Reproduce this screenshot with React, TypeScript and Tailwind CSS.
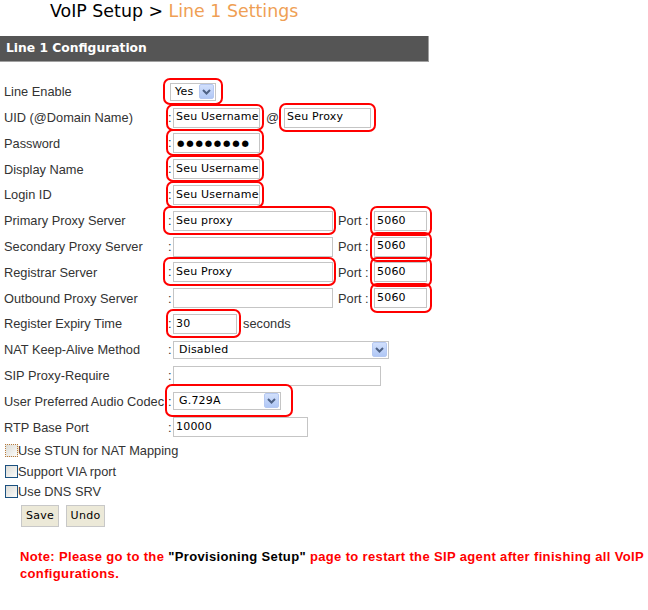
import React from "react";

const LBL = "font-['Liberation_Sans',Arial,sans-serif] text-[12.8px] text-[#333]";
const FLD = "font-['DejaVu_Sans',Verdana,sans-serif] text-[11px] text-black";

function Row({ label, children }: { label: string; children?: React.ReactNode }) {
  return (
    <div className="flex h-[25.8px] items-center">
      <div className={`w-[168px] shrink-0 whitespace-nowrap pl-[4px] ${LBL}`}>{label}</div>
      <div className="flex items-center">{children}</div>
    </div>
  );
}

function Colon() {
  return <span className={`w-[5px] shrink-0 ${LBL}`}>:</span>;
}

function Hl({ children, box }: { children: React.ReactNode; box: string }) {
  return (
    <span className="relative inline-flex">
      {children}
      <span className={`pointer-events-none absolute rounded-[7px] border-2 border-[#ff0000] ${box}`} />
    </span>
  );
}

function Input({ value, w }: { value?: React.ReactNode; w: string }) {
  return (
    <div className={`flex h-[20px] items-center border border-[#c5c5c5] bg-white pl-[2px] ${w} ${FLD} whitespace-nowrap overflow-hidden tracking-[0.2px]`}>
      {value}
    </div>
  );
}

function Arrow() {
  return (
    <div className="flex h-[15px] w-[15px] items-center justify-center rounded-[2px] border border-[#b5c8f2] bg-gradient-to-b from-[#d2e0fc] to-[#b0c7f5]">
      <svg width="9" height="6" viewBox="0 0 9 6">
        <polyline points="1,1 4.5,4.5 8,1" fill="none" stroke="#4d6185" strokeWidth="2" />
      </svg>
    </div>
  );
}

function Select({ value, w, pl }: { value: string; w: string; pl: string }) {
  return (
    <div className={`flex h-[18px] items-center justify-between border border-[#c5c5c5] bg-white pr-[1px] ${pl} ${w} ${FLD} tracking-[0.2px]`}>
      <span>{value}</span>
      <Arrow />
    </div>
  );
}

function Port() {
  return (
    <>
      <span className={`ml-[5px] w-[36px] shrink-0 ${LBL}`}>Port :</span>
      <Hl box="-left-[4px] -right-[5px] -top-[5px] -bottom-[5px]">
        <Input value="5060" w="w-[53px]" />
      </Hl>
    </>
  );
}

function Check({ label, focus }: { label: string; focus?: boolean }) {
  return (
    <div className="flex h-[20.7px] items-center pl-[5px]">
      <div
        className={`h-[13px] w-[13px] shrink-0 bg-gradient-to-br from-[#dcdcd7] to-[#fbfbf9] ${
          focus ? "border border-dotted border-[#b87a3a]" : "border border-[#1c5180]"
        }`}
      />
      <span className={`${LBL}`}>{label}</span>
    </div>
  );
}

function Btn({ label, w }: { label: string; w: string }) {
  return (
    <div className={`flex h-[22px] ${w} items-center justify-center border border-[#c8c8c8] bg-[#ece9d8] ${FLD} tracking-[0.3px]`}>
      {label}
    </div>
  );
}

export default function App() {
  return (
    <div className="h-[610px] w-[648px] bg-white">
      <div className="whitespace-nowrap pl-[50px] pt-[1px] font-['DejaVu_Sans',Verdana,sans-serif] text-[17.4px] leading-[20px] text-black">
        VoIP Setup &gt; <span className="text-[#ef9f55]">Line 1 Settings</span>
      </div>

      <div className="mt-[15px] flex h-[26px] w-[429px] items-center border-b border-r border-[#a0a0a0] bg-[#555555] pl-[6px] font-['DejaVu_Sans',Verdana,sans-serif] text-[12.3px] font-bold text-white">
        Line 1 Configuration
      </div>

      <div className="mt-[17px]">
        <Row label="Line Enable">
          <span className="w-[2px]" />
          <Hl box="-left-[7px] -right-[7px] -top-[5px] -bottom-[4px]">
            <Select value="Yes" w="w-[46px]" pl="pl-[4px]" />
          </Hl>
        </Row>
        <Row label="UID (@Domain Name)">
          <Hl box="-left-[2px] -right-[4px] -top-[4px] -bottom-[3px]">
            <Colon />
            <Input value="Seu Username" w="w-[87px]" />
          </Hl>
          <span className={`ml-[6px] mr-[5px] ${LBL}`}>@</span>
          <Hl box="-left-[5px] -right-[5px] -top-[5px] -bottom-[4px]">
            <Input value="Seu Proxy" w="w-[87px]" />
          </Hl>
        </Row>
        <Row label="Password">
          <Hl box="-left-[2px] -right-[4px] -top-[4px] -bottom-[3px]">
            <Colon />
            <Input value={<span className="pl-[1px] text-[8.5px] tracking-[1.8px]">●●●●●●●●</span>} w="w-[87px]" />
          </Hl>
        </Row>
        <Row label="Display Name">
          <Hl box="-left-[2px] -right-[4px] -top-[4px] -bottom-[3px]">
            <Colon />
            <Input value="Seu Username" w="w-[87px]" />
          </Hl>
        </Row>
        <Row label="Login ID">
          <Hl box="-left-[2px] -right-[4px] -top-[4px] -bottom-[3px]">
            <Colon />
            <Input value="Seu Username" w="w-[87px]" />
          </Hl>
        </Row>
        <Row label="Primary Proxy Server">
          <Hl box="-left-[5px] -right-[3px] -top-[5px] -bottom-[4px]">
            <Colon />
            <Input value="Seu proxy" w="w-[160px]" />
          </Hl>
          <Port />
        </Row>
        <Row label="Secondary Proxy Server">
          <Colon />
          <Input w="w-[160px]" />
          <Port />
        </Row>
        <Row label="Registrar Server">
          <Hl box="-left-[5px] -right-[3px] -top-[5px] -bottom-[4px]">
            <Colon />
            <Input value="Seu Proxy" w="w-[160px]" />
          </Hl>
          <Port />
        </Row>
        <Row label="Outbound Proxy Server">
          <Colon />
          <Input w="w-[160px]" />
          <Port />
        </Row>
        <Row label="Register Expiry Time">
          <Hl box="-left-[2px] -right-[4px] -top-[5px] -bottom-[4px]">
            <Colon />
            <Input value="30" w="w-[64px]" />
          </Hl>
          <span className={`ml-[6px] ${LBL}`}>seconds</span>
        </Row>
        <Row label="NAT Keep-Alive Method">
          <Colon />
          <Select value="Disabled" w="w-[216px]" pl="pl-[5px]" />
        </Row>
        <Row label="SIP Proxy-Require">
          <Colon />
          <Input w="w-[208px]" />
        </Row>
        <Row label="User Preferred Audio Codec">
          <Hl box="-left-[3px] -right-[12px] -top-[8px] -bottom-[6px]">
            <Colon />
            <Select value="G.729A" w="w-[108px]" pl="pl-[5px]" />
          </Hl>
        </Row>
        <Row label="RTP Base Port">
          <Colon />
          <Input value="10000" w="w-[135px]" />
        </Row>
      </div>

      <div>
        <Check label="Use STUN for NAT Mapping" focus />
        <Check label="Support VIA rport" />
        <Check label="Use DNS SRV" />
      </div>

      <div className="mt-[3px] flex gap-[7px] pl-[21px]">
        <Btn label="Save" w="w-[38px]" />
        <Btn label="Undo" w="w-[39px]" />
      </div>

      <div className="mt-[21px] whitespace-nowrap pl-[20px] font-['Liberation_Sans',Arial,sans-serif] text-[13px] font-bold leading-[17px] tracking-[0.35px] text-[#ff0000]">
        Note: Please go to the <span className="text-black">"Provisioning Setup"</span> page to restart the SIP agent after finishing all VoIP
        <br />
        configurations.
      </div>
    </div>
  );
}
